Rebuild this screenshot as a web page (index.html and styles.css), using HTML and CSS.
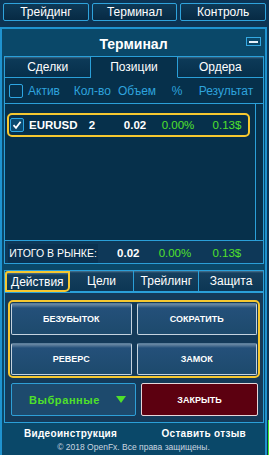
FILE: index.html
```html
<!DOCTYPE html>
<html>
    <head>
        <title>OpenFx Терминал</title>
        <meta charset="UTF-8">
        <link rel="stylesheet" href="styles.css">
    </head>
    <body>
        <div class="topnav">
            <button type="button" class="navbtn">Трейдинг</button>
            <button type="button" class="navbtn">Терминал</button>
            <button type="button" class="navbtn">Контроль</button>
        </div>

        <div class="panel">
            <div class="panel-head">
                <span class="panel-title">Терминал</span>
                <span class="minbtn"></span>
            </div>

            <div class="box">
                <div class="tabs">
                    <div class="tab">Сделки</div>
                    <div class="tab active">Позиции</div>
                    <div class="tab">Ордера</div>
                </div>

                <div class="grid thead">
                    <span class="cb"></span>
                    <span class="left">Актив</span>
                    <span>Кол-во</span>
                    <span>Объем</span>
                    <span>%</span>
                    <span>Результат</span>
                </div>

                <div class="list">
                    <div class="rows">
                        <div class="grid row selected">
                            <span class="cb checked">
                                <svg width="10" height="10" viewBox="0 0 10 10"><path d="M1.5 5.2 L4 7.8 L8.6 1.8" fill="none" stroke="#fff" stroke-width="1.8"/></svg>
                            </span>
                            <span class="left sym">EURUSD</span>
                            <span class="num">2</span>
                            <span class="num">0.02</span>
                            <span class="green">0.00%</span>
                            <span class="green">0.13$</span>
                        </div>
                    </div>
                    <div class="scroll"></div>
                </div>

                <div class="total">
                    <span class="total-label">ИТОГО В РЫНКЕ:</span>
                    <span class="total-vol">0.02</span>
                    <span class="green total-pct">0.00%</span>
                    <span class="green total-res">0.13$</span>
                </div>
            </div>

            <div class="tabs tabs2">
                <div class="tab active-y">Действия</div>
                <div class="tab">Цели</div>
                <div class="tab">Трейлинг</div>
                <div class="tab">Защита</div>
            </div>

            <div class="actions">
                <div class="action-grid">
                    <button type="button" class="abtn">БЕЗУБЫТОК</button>
                    <button type="button" class="abtn">СОКРАТИТЬ</button>
                    <button type="button" class="abtn">РЕВЕРС</button>
                    <button type="button" class="abtn">ЗАМОК</button>
                </div>
                <div class="bottom-row">
                    <div class="select">
                        <span>Выбранные</span>
                        <svg width="10" height="7" viewBox="0 0 10 7"><path d="M0 0 H10 L5 7 Z" fill="#4fe02a"/></svg>
                    </div>
                    <button type="button" class="closebtn">ЗАКРЫТЬ</button>
                </div>
            </div>

            <div class="footer">
                <div class="links">
                    <span>Видеоинструкция</span>
                    <span>Оставить отзыв</span>
                </div>
                <div class="copy">© 2018 OpenFx. Все права защищены.</div>
            </div>
        </div>
        <div class="edge"></div>
    </body>
</html>
```

FILE: styles.css
```css
body {
    margin: 0;
    width: 269px;
    height: 455px;
    overflow: hidden;
    background-color: #0c3454;
    font-family: "Liberation Sans", Arial, sans-serif;
    color: #fff;
    position: relative;
}

/* верхнее меню */
.topnav {
    display: flex;
    gap: 3px;
    padding: 3px 3px 0 3px;
}
.navbtn {
    flex: 1;
    height: 18px;
    padding: 0;
    font-family: inherit;
    font-size: 12px;
    color: #fff;
    background: linear-gradient(#0e3956, #072a44);
    border: 1px solid #2fa3dc;
    border-radius: 2px;
}

/* основная панель */
.panel {
    margin: 6px 2px 0 0;
    height: 430px;
    background-color: #0a4869;
    border: 2px solid #1f93cf;
    border-bottom: none;
}
.panel-head {
    height: 26px;
    display: flex;
    align-items: center;
    justify-content: center;
    position: relative;
}
.panel-title {
    font-size: 14px;
    font-weight: bold;
    margin-top: 3px;
}
.minbtn {
    position: absolute;
    right: 4px;
    top: 8px;
    width: 15px;
    height: 9px;
    border: 1px solid #35a9e2;
    box-sizing: border-box;
}
.minbtn::after {
    content: "";
    position: absolute;
    left: 2px;
    right: 2px;
    top: 3px;
    height: 2px;
    background: #e8f2fa;
}

.box {
    margin: 1px 1px 0 2px;
    border: 1px solid #2a9fd8;
    background-color: #06304b;
}

/* вкладки */
.tabs {
    display: flex;
    height: 21px;
}
.tab {
    flex: 1;
    display: flex;
    align-items: center;
    justify-content: center;
    font-size: 12px;
    background: linear-gradient(#3d6a88 0, #0d3a58 2px, #062f4b 100%);
    border-right: 1px solid #2a9fd8;
    border-bottom: 1px solid #2a9fd8;
}
.tab:last-child {
    border-right: none;
}
.tab.active {
    background: #06304b;
    border-bottom-color: #06304b;
}

/* таблица */
.grid {
    display: grid;
    grid-template-columns: 19px 43px 44px 44px 36px 62px;
    align-items: center;
    text-align: center;
    font-size: 11px;
}
.thead {
    height: 25px;
    padding-left: 4px;
    font-size: 12px;
    color: #2ea3dd;
    border-bottom: 1px solid #2a9fd8;
}
.thead span:nth-child(3) {
    text-align: right;
    padding-right: 4px;
}
.left {
    text-align: left;
}
.cb {
    width: 14px;
    height: 14px;
    box-sizing: border-box;
    border: 1px solid #2ea6e2;
    border-radius: 2px;
    display: flex;
    align-items: center;
    justify-content: center;
}
.cb.checked {
    background: #0b4a70;
}
.list {
    display: flex;
    height: 136px;
    border-bottom: 1px solid #2a9fd8;
}
.rows {
    flex: 1;
    padding: 9px 0 0 2px;
}
.scroll {
    width: 7px;
    border-left: 1px solid #2a9fd8;
}
.row {
    width: 243px;
    height: 24px;
    box-sizing: border-box;
    padding-left: 1px;
    border: 2px solid #f6c830;
    border-radius: 5px;
}
.sym, .num {
    font-weight: bold;
    font-size: 11.5px;
}
.row .num:nth-child(3) {
    padding-right: 4px;
}
.row .num:nth-child(4) {
    padding-right: 6px;
}
.green {
    color: #52e02b;
    font-size: 11.5px;
}

/* итого */
.total {
    display: flex;
    align-items: flex-end;
    height: 22px;
    padding-left: 3px;
    background-color: #0e3858;
}
.total-label {
    width: 92px;
    height: 19px;
    line-height: 19px;
    text-align: center;
    font-size: 10.5px;
    background-color: #0a3150;
}
.total-vol, .total-pct, .total-res {
    line-height: 19px;
    text-align: center;
}
.total-vol {
    width: 62px;
    font-size: 11.5px;
    font-weight: bold;
}
.total-pct {
    width: 32px;
}
.total-res {
    width: 74px;
}

/* нижние вкладки */
.tabs2 {
    margin: 6px 1px 0 2px;
    border: 1px solid #2a9fd8;
    border-bottom: none;
}
.tabs2 .tab {
    background: linear-gradient(#4a7592 0, #153f5e 2px, #0c3654 100%);
}
.tab.active-y {
    flex: 0.95;
    border: 2px solid #f6c830;
    border-radius: 0 0 5px 0;
    border-top-left-radius: 3px;
}

/* действия */
.actions {
    margin: 0 1px 0 2px;
    height: 131px;
    border: 1px solid #2a9fd8;
    background-color: #143a59;
    padding: 7px 3px 0 3px;
    box-sizing: border-box;
}
.action-grid {
    display: grid;
    grid-template-columns: 1fr 1fr;
    gap: 8px 5px;
    padding: 1px;
    border: 2px solid #f6c830;
    border-radius: 5px;
}
.abtn, .closebtn {
    height: 32px;
    padding: 0;
    font-family: inherit;
    font-size: 9px;
    font-weight: bold;
    color: #fff;
    background: linear-gradient(#6d8ba5 0, #24507a 4px, #1d4a6d 100%);
    border: 1px solid #c5d3df;
    border-top-color: #5c7f9c;
    border-radius: 2px;
}
.bottom-row {
    display: flex;
    gap: 5px;
    margin-top: 5px;
    padding: 0 2px 0 3px;
}
.select {
    flex: 1;
    height: 33px;
    box-sizing: border-box;
    display: flex;
    align-items: center;
    justify-content: center;
    gap: 16px;
    padding-left: 8px;
    background-color: #1d4a6d;
    border: 1px solid #2e9fd6;
    border-radius: 2px;
    color: #4fe02a;
    font-size: 11px;
    font-weight: bold;
    letter-spacing: 0.6px;
}
.closebtn {
    flex: 1;
    height: 33px;
    background: #5c0010;
    border: 1px solid #e6d6da;
    border-radius: 2px;
}

/* подвал */
.footer {
    padding-top: 5px;
}
.links {
    display: flex;
    justify-content: space-between;
    padding: 0 19px 0 22px;
    font-size: 10px;
    font-weight: bold;
    letter-spacing: 0.3px;
}
.copy {
    margin-top: 3px;
    text-align: center;
    font-size: 8.5px;
    color: #cbd6e0;
}

.edge {
    position: absolute;
    right: 0;
    top: 420px;
    width: 1px;
    height: 35px;
    background: #3ee02a;
}
```
